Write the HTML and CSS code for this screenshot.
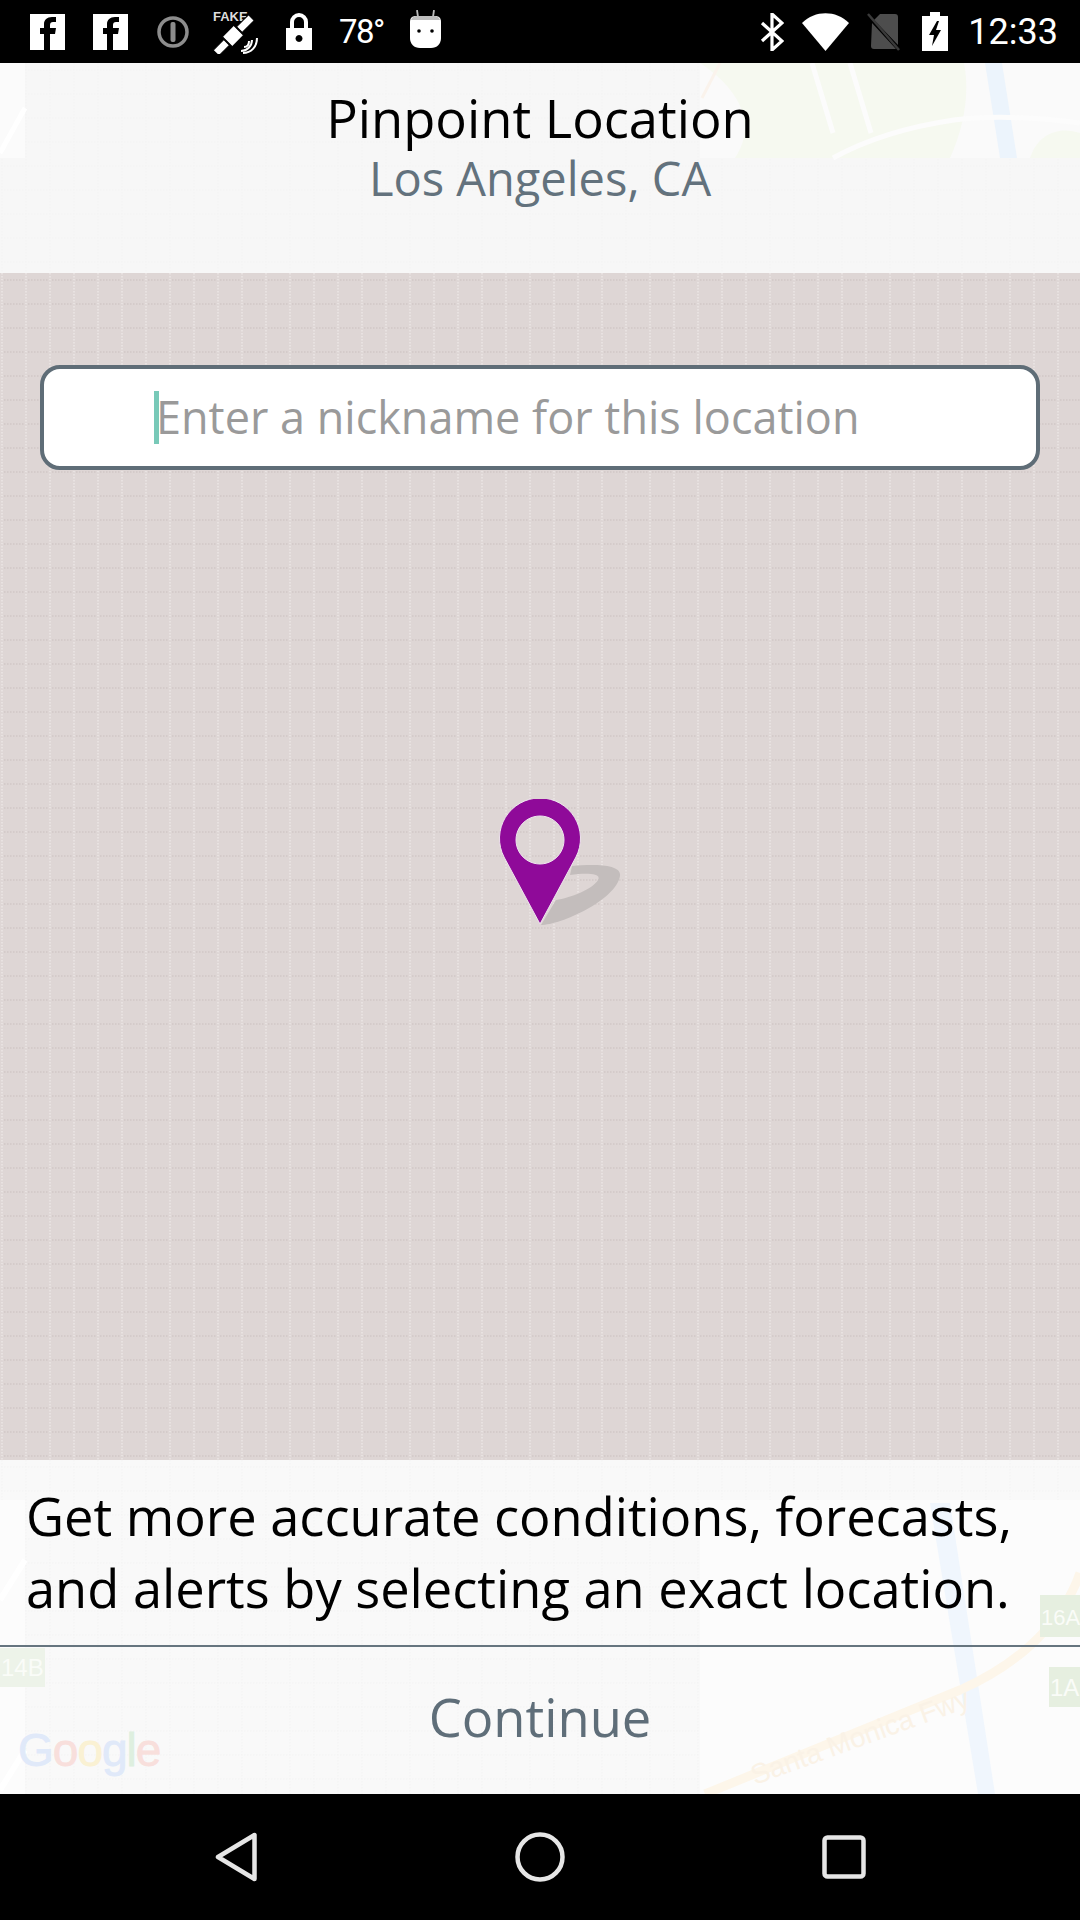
FILE: index.html
```html
<!DOCTYPE html>
<html lang="en">
<head>
<meta charset="utf-8">
<title>Pinpoint Location</title>
<link rel="stylesheet" href="styles.css">
</head>
<body>
<div class="screen">
  <div class="status">
    <div class="status-left">
      <svg class="ic" width="35" height="36" viewBox="0 0 35 36"><rect width="35" height="36" fill="#fff"/><path d="M20 36V20h5l1-6h-6v-3c0-2 1-3 3-3h3V3h-4c-5 0-8 3-8 7v4H10v6h4v16z" fill="#000"/></svg>
      <svg class="ic ic-f2" width="35" height="36" viewBox="0 0 35 36"><rect width="35" height="36" fill="#fff"/><path d="M20 36V20h5l1-6h-6v-3c0-2 1-3 3-3h3V3h-4c-5 0-8 3-8 7v4H10v6h4v16z" fill="#000"/></svg>
      <svg class="ic ic-info" width="32" height="32" viewBox="0 0 32 32"><circle cx="16" cy="16" r="14" fill="none" stroke="#8d8d8d" stroke-width="3.500"/><rect x="13.500" y="6" width="5" height="20" rx="2" fill="#8d8d8d"/></svg>
      <svg class="ic ic-sat" width="46" height="44" viewBox="0 0 46 44">
        <text x="0" y="11" class="fake">FAKE</text>
        <g transform="rotate(-45 20 26)" fill="#fff" stroke="#000" stroke-width="1"><rect x="12" y="19" width="16" height="14"/><rect x="-4" y="22" width="15" height="8"/><rect x="29" y="22" width="17" height="8"/></g>
        <path d="M28 41c6 0 11-5 11-11M30 43c8 0 14-6 14-15M31 37c4 0 5-3 5-6" fill="none" stroke="#fff" stroke-width="2"/>
      </svg>
      <svg class="ic ic-lock" width="26" height="37" viewBox="0 0 26 37"><path d="M6 15V9a7 7 0 0 1 14 0v6" fill="none" stroke="#fff" stroke-width="4"/><path fill-rule="evenodd" d="M0 15h26v22H0zM13 22a3.500 3.500 0 1 0 .01 0z" fill="#fff"/></svg>
      <span class="temp">78°</span>
      <svg class="ic ic-droid" width="31" height="38" viewBox="0 0 31 38"><path d="M7 0l1 7M24 0l-1 7" stroke="#bbb" stroke-width="1.800"/><path d="M6 6h19c4 0 6 2 6 6v16c0 6-4 10-10 10H10C4 38 0 34 0 28V12c0-4 2-6 6-6z" fill="#fff"/><path d="M1 10c1-3 3-4 5-4h19c2 0 4 1 5 4z" fill="#bdbdbd"/><circle cx="9" cy="21" r="1.800" fill="#000"/><circle cx="22" cy="21" r="1.800" fill="#000"/></svg>
    </div>
    <div class="status-right">
      <svg class="ic" width="24" height="38" viewBox="0 0 24 38"><path d="M2 10l20 18-10 9V1l10 9L2 28" fill="none" stroke="#fff" stroke-width="3.200"/></svg>
      <svg class="ic ic-wifi" width="47" height="38" viewBox="0 0 47 38"><path d="M0 10C13-3 34-3 47 10L23.500 38z" fill="#fff"/></svg>
      <svg class="ic ic-sim" width="34" height="38" viewBox="0 0 34 38"><path d="M13 1h15c2 0 3 1 3 3v28L7 7zM5 10l24 26H7c-2 0-3-1-3-3z" fill="#4d4d4d"/><path d="M1 1l31 36" stroke="#3a3a3a" stroke-width="2.500"/></svg>
      <svg class="ic ic-bat" width="26" height="39" viewBox="0 0 26 39"><path fill-rule="evenodd" d="M8 0h10v4h8v35H0V4h8zM15 9L7 23h5l-2 11 9-16h-5l3-9z" fill="#fff"/></svg>
      <span class="clock">12:33</span>
    </div>
  </div>

  <header class="head">
    <svg class="decor" viewBox="0 0 1080 210" aria-hidden="true">
      <defs>
        <pattern id="fine" x="1" y="6" width="24" height="24" patternUnits="userSpaceOnUse">
          <path d="M0 1h24M1 0v24" stroke="#f3f3f3" stroke-width="1" stroke-dasharray="1.500 1.500" fill="none"/>
        </pattern>
      </defs>
      <rect width="1080" height="210" fill="url(#fine)"/>
      <rect x="0" y="0" width="25" height="95" fill="#fbfbfb"/>
      <path d="M0 90L25 45" stroke="#fff" stroke-width="5" fill="none"/>
      <rect x="700" y="0" width="380" height="95" fill="#fafafa"/>
      <path d="M700 0h264c6 30 0 65-14 95H735c20-30 10-65-35-95z" fill="#f6f9f0"/>
      <path d="M1030 95c8-25 30-32 50-25v25z" fill="#f6f9f0"/>
      <path d="M985 0h17l15 95h-17z" fill="#ecf4fc"/>
      <path d="M833 95c40-22 80-32 121-38 40-5 80-3 126 3M812 0l21 70M850 0l21 70" fill="none" stroke="#fcfcfc" stroke-width="5"/>
      <path d="M720 0l-18 35" stroke="#faf3ec" stroke-width="3" fill="none"/>
    </svg>
    <h1 class="title">Pinpoint Location</h1>
    <p class="city">Los Angeles, CA</p>
  </header>

  <main class="map">
    <svg class="decor" aria-hidden="true">
      <defs>
        <pattern id="dots" x="1" y="6" width="24" height="24" patternUnits="userSpaceOnUse">
          <rect x="0" y="0" width="24" height="24" fill="#ded6d5"/>
          <path d="M0 0.500h24M0 1.500h24" stroke="#d4cbca" stroke-width="1" stroke-dasharray="1.500 1.500"/>
          <path d="M0.500 0v24M1.500 0v24" stroke="#e8e2e1" stroke-width="1" stroke-dasharray="1.500 1.500"/>
        </pattern>
      </defs>
      <rect width="100%" height="100%" fill="url(#dots)"/>
    </svg>
    <div class="field">
      <span class="caret"></span>
      <span class="hint">Enter a nickname for this location</span>
    </div>
    <svg class="pin" width="122" height="128" viewBox="0 0 122 128" aria-hidden="true">
      <path d="M42 126c20 0 75-25 79-49 2-12-26-12-48-10l-2 9c16-2 32-2 28 5-5 9-28 18-42 20z" fill="#c3bdbc"/>
      <path fill-rule="evenodd" d="M41 125L5 58A40.500 40.500 0 1 1 77 58zM41 17a24 24 0 1 0 .01 0z" fill="#8f0a99" stroke="#eee5ee" stroke-width="1"/>
    </svg>
  </main>

  <section class="foot">
    <svg class="decor" viewBox="0 0 1080 334" aria-hidden="true">
      <rect width="1080" height="334" fill="url(#fine)"/>
      <rect x="0" y="40" width="25" height="294" fill="#fcfcfc"/>
      <rect x="700" y="40" width="380" height="294" fill="#fcfcfc"/>
      <path d="M930 43h20l45 291h-17z" fill="#f0f6fd"/>
      <path d="M705 334L960 230c50-22 100-60 120-117" fill="none" stroke="#fdf6ea" stroke-width="9"/>
      <path d="M0 140L25 100M0 330l25-40" stroke="#fff" stroke-width="6" fill="none"/>
      <rect x="1040" y="135" width="40" height="42" fill="#e6efe0"/>
      <rect x="1049" y="207" width="31" height="40" fill="#e6efe0"/>
      <rect x="0" y="188" width="45" height="39" fill="#edf3e9"/>
      <text x="1041" y="165" class="shield shield-wide">16A</text>
      <text x="1050" y="236" class="shield">1A</text>
      <text x="1" y="216" class="shield">14B</text>
      <text transform="translate(755 325) rotate(-20)" class="road">Santa Monica Fwy</text>
    </svg>
    <p class="blurb">Get more accurate conditions, forecasts, and alerts by selecting an exact location.</p>
    <div class="continue">
      <span class="logo"><span class="g-b">G</span><span class="g-r">o</span><span class="g-y">o</span><span class="g-b">g</span><span class="g-g">l</span><span class="g-r">e</span></span>
      <span class="continue-label">Continue</span>
    </div>
  </section>

  <nav class="nav">
    <svg width="42" height="50" viewBox="0 0 42 50"><path d="M39.500 3v44L3 25z" fill="none" stroke="#e6e6e6" stroke-width="4.500" stroke-linejoin="round"/></svg>
    <svg width="50" height="50" viewBox="0 0 50 50"><circle cx="25" cy="25" r="22.500" fill="none" stroke="#e6e6e6" stroke-width="4.500"/></svg>
    <svg width="44" height="44" viewBox="0 0 44 44"><rect x="2.500" y="2.500" width="39" height="39" rx="3" fill="none" stroke="#e6e6e6" stroke-width="4.500"/></svg>
  </nav>
</div>
</body>
</html>
```
FILE: styles.css
```css
* { box-sizing: border-box; }
html, body { margin: 0; padding: 0; background: #000; }
.screen {
  width: 1080px;
  height: 1920px;
  display: flex;
  flex-direction: column;
  overflow: hidden;
  font-family: "Open Sans", "Noto Sans", sans-serif;
}
.status {
  height: 63px;
  flex: none;
  background: #000;
  display: flex;
  justify-content: space-between;
  align-items: center;
  padding: 0 22px 0 30px;
}
.status-left, .status-right { display: flex; align-items: center; }
.ic { display: block; flex: none; }
.ic-f2 { margin-left: 28px; }
.ic-info { margin-left: 29px; }
.ic-sat { margin-left: 24px; }
.ic-lock { margin-left: 27px; }
.temp { margin-left: 27px; color: #fff; font: 400 33px/1 Roboto, sans-serif; letter-spacing: -1.5px; }
.ic-droid { margin-left: 26px; margin-top: -5px; }
.fake { font: 700 13px "Liberation Sans", sans-serif; fill: #ddd; }
.ic-wifi { margin-left: 18px; }
.ic-sim { margin-left: 18px; }
.ic-bat { margin-left: 21px; }
.clock { margin-left: 20px; color: #fff; font: 400 36px/1 Roboto, sans-serif; }
.head {
  position: relative;
  height: 210px;
  flex: none;
  background: #f7f7f7;
  text-align: center;
  padding-top: 25px;
}
.decor { position: absolute; left: 0; top: 0; width: 100%; height: 100%; display: block; }
.title {
  position: relative;
  margin: 0;
  font-size: 52.5px;
  line-height: 60px;
  font-weight: 400;
  color: #000;
}
.city {
  position: relative;
  margin: 5px 0 0;
  font-size: 47px;
  line-height: 50px;
  color: #63727d;
}
.map {
  position: relative;
  flex: 1;
  padding: 92px 40px 0;
  display: flex;
  flex-direction: column;
  align-items: center;
}
.field {
  position: relative;
  width: 1000px;
  height: 105px;
  background: #fff;
  border: 4px solid #5f6d77;
  border-radius: 20px;
  display: flex;
  align-items: center;
  padding-left: 110px;
}
.caret {
  width: 5px;
  height: 53px;
  background: #78c9b8;
  flex: none;
}
.hint { font-size: 45px; color: #9a9a9a; margin-left: -3px; padding-bottom: 3px; white-space: nowrap; }
.pin { position: relative; margin: 329px 0 0 40px; display: block; flex: none; }
.foot { position: relative; height: 334px; flex: none; background: #f9f9f9; }
.blurb {
  position: relative;
  margin: 0;
  height: 187px;
  padding: 20px 26px 0;
  font-size: 52.4px;
  line-height: 72px;
  color: #000;
  border-bottom: 2px solid #66757f;
}
.continue {
  position: relative;
  height: 147px;
  display: flex;
  align-items: center;
  justify-content: center;
  padding-bottom: 8px;
}
.continue-label { font-size: 52.5px; color: #5f6e79; }
.logo {
  position: absolute;
  left: 18px;
  top: 80px;
  font: 400 46px/1 "Liberation Sans", sans-serif;
  letter-spacing: -1px;
  -webkit-text-stroke: 0.8px currentColor;
}
.g-b { color: #e0e9f9; }
.g-r { color: #f8dfdc; }
.g-y { color: #faf1d3; }
.g-g { color: #deefdf; }
.shield { font: 400 24px "Liberation Sans", sans-serif; fill: #fafcf8; }
.shield-wide { font-size: 22px; }
.road { font: 400 28px "Liberation Sans", sans-serif; fill: #faf2e6; }
.nav {
  flex: none;
  height: 126px;
  background: #000;
  display: grid;
  grid-template-columns: repeat(3, 304px);
  justify-content: center;
  justify-items: center;
  align-items: center;
}
```
